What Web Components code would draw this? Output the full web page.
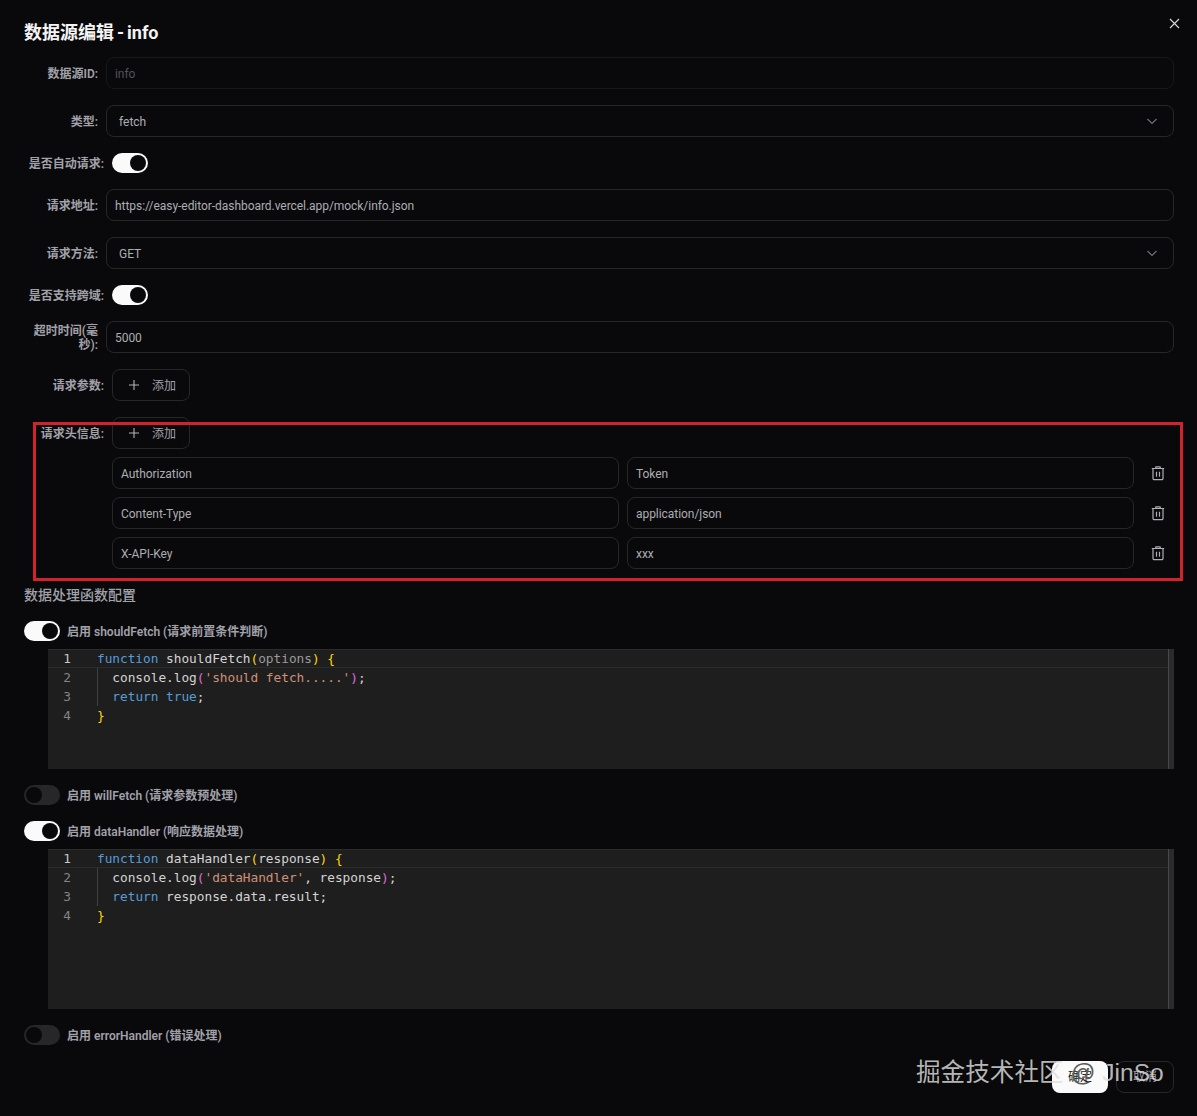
<!DOCTYPE html>
<html lang="zh">
<head>
<meta charset="utf-8">
<title>数据源编辑</title>
<style>
  html, body { margin: 0; background: #09090b; }
  body { font-family: Roboto, "Noto Sans CJK SC", sans-serif; color: #d4d4d8; }
</style>
</head>
<body>
<ds-dialog heading="数据源编辑 - info">
  <form-row label="数据源ID:" narrow><text-field value="info" disabled></text-field></form-row>
  <form-row label="类型:" narrow><select-field value="fetch"></select-field></form-row>
  <form-row label="是否自动请求:"><toggle-switch on></toggle-switch></form-row>
  <form-row label="请求地址:" narrow><text-field value="https://easy-editor-dashboard.vercel.app/mock/info.json"></text-field></form-row>
  <form-row label="请求方法:" narrow><select-field value="GET"></select-field></form-row>
  <form-row label="是否支持跨域:"><toggle-switch on></toggle-switch></form-row>
  <form-row label="超时时间(毫秒):" narrow><text-field value="5000"></text-field></form-row>
  <form-row label="请求参数:"><add-button></add-button></form-row>
  <form-row label="请求头信息:">
    <add-button></add-button>
    <kv-row name="Authorization" value="Token"></kv-row>
    <kv-row name="Content-Type" value="application/json"></kv-row>
    <kv-row name="X-API-Key" value="xxx"></kv-row>
  </form-row>
  <section-title>数据处理函数配置</section-title>
  <handler-block on label="启用 shouldFetch (请求前置条件判断)" height="120">
    <span class="k">function</span> shouldFetch<span class="y">(</span><span class="d">options</span><span class="y">)</span> <span class="y">{</span>
  console.log<span class="p">(</span><span class="s">'should fetch.....'</span><span class="p">)</span>;
  <span class="k">return</span> <span class="k">true</span>;
<span class="y">}</span></handler-block>
  <handler-block label="启用 willFetch (请求参数预处理)"></handler-block>
  <handler-block on label="启用 dataHandler (响应数据处理)" height="160">
    <span class="k">function</span> dataHandler<span class="y">(</span>response<span class="y">)</span> <span class="y">{</span>
  console.log<span class="p">(</span><span class="s">'dataHandler'</span>, response<span class="p">)</span>;
  <span class="k">return</span> response.data.result;
<span class="y">}</span></handler-block>
  <handler-block label="启用 errorHandler (错误处理)"></handler-block>
  <dialog-footer></dialog-footer>
</ds-dialog>

<script>
const SANS = 'Roboto, "Noto Sans CJK SC", sans-serif';

class DsDialog extends HTMLElement {
  constructor() {
    super();
    this.attachShadow({ mode: 'open' });
  }
  connectedCallback() {
    this.shadowRoot.innerHTML = `
      <style>
        :host { display: block; position: relative; height: 1116px; box-sizing: border-box; overflow: hidden; background: #09090b; }
        .wrap { display: flex; flex-direction: column; gap: 16px; padding: 20px 23px 0 24px; }
        h2 { margin: 0 0 -3px; height: 24px; box-sizing: border-box; padding-top: 1px; font: 700 18px/24px ${SANS}; color: #f4f4f5; word-spacing: -1.5px; }
        .close { position: absolute; left: 1168px; top: 17px; width: 13px; height: 13px; }
        .mark { position: absolute; left: 916px; top: 1056px; font: 400 24.6px/34px "Liberation Sans", "Noto Sans CJK SC", sans-serif; color: rgba(222,222,222,.82); white-space: nowrap; }
        .mark b { font-weight: 400; color: #5c5c5c; }
        .redbox { position: absolute; left: 33px; top: 422px; width: 1150px; height: 159px; box-sizing: border-box; border: 3px solid #d2232d; pointer-events: none; }
      </style>
      <div class="wrap">
        <h2>${this.getAttribute('heading')}</h2>
        <slot></slot>
      </div>
      <svg class="close" viewBox="0 0 13 13" fill="none" stroke="#d4d4d8" stroke-width="1.2"><path d="M2 2l9 9M11 2l-9 9"/></svg>
      <div class="redbox"></div>
      <div class="mark">掘金技术社区 <b>@</b> JinSo</div>
    `;
  }
}

class FormRow extends HTMLElement {
  constructor() {
    super();
    this.attachShadow({ mode: 'open' });
  }
  connectedCallback() {
    const w = this.hasAttribute('narrow') ? 74 : 80;
    this.shadowRoot.innerHTML = `
      <style>
        :host { display: flex; gap: 8px; align-items: flex-start; }
        .label { flex: 0 0 ${w}px; box-sizing: border-box; padding-top: 2px; display: flex; align-items: center; justify-content: flex-end; text-align: right; font: 600 12px/14px ${SANS}; color: #a1a1aa; align-self: flex-start; height: var(--row-h, 32px); }
        .body { flex: 1; min-width: 0; display: flex; flex-direction: column; gap: 8px; align-items: stretch; }
      </style>
      <div class="label"><span>${this.getAttribute('label')}</span></div>
      <div class="body"><slot></slot></div>
    `;
    if (this.querySelector('toggle-switch')) this.style.setProperty('--row-h', '20px');
  }
}

class TextField extends HTMLElement {
  constructor() {
    super();
    this.attachShadow({ mode: 'open' });
  }
  connectedCallback() {
    const off = this.hasAttribute('disabled');
    this.shadowRoot.innerHTML = `
      <style>
        :host { display: block; flex: 1; min-width: 0; }
        .box { height: 32px; box-sizing: border-box; padding: 2px 8px 0; display: flex; align-items: center; border: 1px solid ${off ? '#18181b' : '#27272a'}; border-radius: 8px; font: 400 12px/16px ${SANS}; letter-spacing: -.05px; color: ${off ? '#52525b' : '#adadb2'}; white-space: nowrap; overflow: hidden; }
      </style>
      <div class="box">${this.getAttribute('value')}</div>
    `;
  }
}

class SelectField extends HTMLElement {
  constructor() {
    super();
    this.attachShadow({ mode: 'open' });
  }
  connectedCallback() {
    this.shadowRoot.innerHTML = `
      <style>
        :host { display: block; }
        .box { height: 32px; box-sizing: border-box; padding: 0 15px 0 12px; display: flex; align-items: center; justify-content: space-between; border: 1px solid #27272a; border-radius: 8px; font: 400 12px/16px ${SANS}; color: #adadb2; }
        span { padding-top: 2px; }
        svg { width: 12px; height: 12px; }
      </style>
      <div class="box"><span>${this.getAttribute('value')}</span>
        <svg viewBox="0 0 12 12" fill="none" stroke="#71717a" stroke-width="1.1"><path d="M1.500 4l4.500 4.500L10.500 4"/></svg>
      </div>
    `;
  }
}

class ToggleSwitch extends HTMLElement {
  constructor() {
    super();
    this.attachShadow({ mode: 'open' });
  }
  connectedCallback() {
    const on = this.hasAttribute('on');
    this.shadowRoot.innerHTML = `
      <style>
        :host { display: block; width: 36px; height: 20px; flex: none; }
        .track { width: 36px; height: 20px; box-sizing: border-box; border-radius: 10px; padding: 2px; display: flex; justify-content: ${on ? 'flex-end' : 'flex-start'}; background: ${on ? '#fafafa' : '#27272a'}; }
        .knob { width: 16px; height: 16px; border-radius: 50%; background: #09090b; }
      </style>
      <div class="track"><div class="knob"></div></div>
    `;
  }
}

class AddButton extends HTMLElement {
  constructor() {
    super();
    this.attachShadow({ mode: 'open' });
  }
  connectedCallback() {
    this.shadowRoot.innerHTML = `
      <style>
        :host { display: block; width: 78px; }
        .btn { height: 32px; box-sizing: border-box; display: flex; align-items: center; padding-left: 14px; border: 1px solid #27272a; border-radius: 8px; font: 400 12px/16px ${SANS}; color: #a1a1aa; }
        svg { width: 14px; height: 14px; margin-right: 11px; }
        span { padding-top: 2px; }
      </style>
      <div class="btn">
        <svg viewBox="0 0 14 14" fill="none" stroke="#b4b4b8" stroke-width="1.1"><path d="M7 2v10M2 7h10"/></svg>
        <span>添加</span>
      </div>
    `;
  }
}

class KvRow extends HTMLElement {
  constructor() {
    super();
    this.attachShadow({ mode: 'open' });
  }
  connectedCallback() {
    this.shadowRoot.innerHTML = `
      <style>
        :host { display: flex; gap: 8px; align-items: center; }
        svg { flex: none; width: 16px; height: 16px; margin: 0 8px; }
      </style>
      <text-field value="${this.getAttribute('name')}"></text-field>
      <text-field value="${this.getAttribute('value')}"></text-field>
      <svg viewBox="0 0 16 16" fill="none" stroke="#b0b0b4" stroke-width="1.2" stroke-linejoin="round"><path d="M1.800 3.500h12.400M5.800 3.500V1.800h4.400v1.700M3 3.500v10a1.200 1.200 0 0 0 1.200 1.200h7.600a1.200 1.200 0 0 0 1.200-1.200v-10M6.500 6.800v5M9.500 6.800v5"/></svg>
    `;
  }
}

class SectionTitle extends HTMLElement {
  constructor() {
    super();
    this.attachShadow({ mode: 'open' });
  }
  connectedCallback() {
    this.shadowRoot.innerHTML = `
      <style>
        :host { display: block; height: 20px; font: 500 14px/20px ${SANS}; color: #a1a1aa; }
      </style>
      <slot></slot>
    `;
  }
}

class CodeEditor extends HTMLElement {
  constructor() {
    super();
    this.attachShadow({ mode: 'open' });
  }
  connectedCallback() {
    const h = this.getAttribute('height');
    const lines = this.getAttribute('code').split('\n');
    const nums = lines.map((_, i) => `<div class="${i ? '' : 'cur'}">${i + 1}</div>`).join('');
    const rows = lines.map(l => `<div>${l}</div>`).join('');
    this.shadowRoot.innerHTML = `
      <style>
        :host { display: block; position: relative; height: ${h}px; background: #1e1e1e; overflow: hidden; }
        .inner { display: flex; font: 400 12.8px/19px "DejaVu Sans Mono", "Liberation Mono", monospace; letter-spacing: -.03px; }
        .nums { width: 23px; text-align: right; color: #858585; flex: none; }
        .nums .cur { color: #c6c6c6; }
        .code { margin-left: 26px; color: #d4d4d4; white-space: pre; }
        .k { color: #569cd6; } .y { color: #ffd700; } .p { color: #da70d6; } .s { color: #ce9178; } .d { color: #9a9a9a; }
        .curline { position: absolute; left: 0; right: 6px; top: 0; height: 19px; box-sizing: border-box; border-top: 1px solid #2c2c2c; border-bottom: 1px solid #2c2c2c; }
        .guide { position: absolute; left: 49px; top: 19px; width: 1px; height: 38px; background: #404040; }
        .ruler { position: absolute; right: 0; top: 0; bottom: 0; width: 6px; box-sizing: border-box; background: #2a2a2a; border-left: 1px solid #484848; }
      </style>
      <div class="curline"></div>
      <div class="guide"></div>
      <div class="inner">
        <div class="nums">${nums}</div>
        <div class="code">${rows}</div>
      </div>
      <div class="ruler"></div>
    `;
  }
}

class HandlerBlock extends HTMLElement {
  constructor() {
    super();
    this.attachShadow({ mode: 'open' });
  }
  connectedCallback() {
    const on = this.hasAttribute('on');
    const h = this.getAttribute('height');
    const code = this.innerHTML.trim();
    this.shadowRoot.innerHTML = `
      <style>
        :host { display: flex; flex-direction: column; gap: 8px; }
        .head { display: flex; align-items: center; gap: 7px; height: 20px; font: 600 12px/14px ${SANS}; color: #a1a1aa; }
        .head span { padding-top: 2px; }
        .ed { margin-left: 24px; }
      </style>
      <div class="head"><toggle-switch ${on ? 'on' : ''}></toggle-switch><span>${this.getAttribute('label')}</span></div>
      <div class="ed" id="ed"></div>
    `;
    if (h) {
      const ed = document.createElement('code-editor');
      ed.setAttribute('height', h);
      ed.setAttribute('code', code);
      this.shadowRoot.getElementById('ed').appendChild(ed);
    } else {
      this.shadowRoot.getElementById('ed').remove();
    }
  }
}

class DialogFooter extends HTMLElement {
  constructor() {
    super();
    this.attachShadow({ mode: 'open' });
  }
  connectedCallback() {
    this.shadowRoot.innerHTML = `
      <style>
        :host { display: flex; justify-content: flex-end; gap: 8px; }
        .b { height: 32px; box-sizing: border-box; border-radius: 8px; display: flex; align-items: center; justify-content: center; font: 400 12px/16px ${SANS}; }
        .ok { width: 56px; background: #fafafa; color: #18181b; }
        .no { width: 58px; border: 1px solid #27272a; color: #a1a1aa; }
      </style>
      <div class="b ok">确定</div>
      <div class="b no">取消</div>
    `;
  }
}

customElements.define('toggle-switch', ToggleSwitch);
customElements.define('text-field', TextField);
customElements.define('select-field', SelectField);
customElements.define('add-button', AddButton);
customElements.define('kv-row', KvRow);
customElements.define('section-title', SectionTitle);
customElements.define('code-editor', CodeEditor);
customElements.define('handler-block', HandlerBlock);
customElements.define('form-row', FormRow);
customElements.define('dialog-footer', DialogFooter);
customElements.define('ds-dialog', DsDialog);
</script>
</body>
</html>
